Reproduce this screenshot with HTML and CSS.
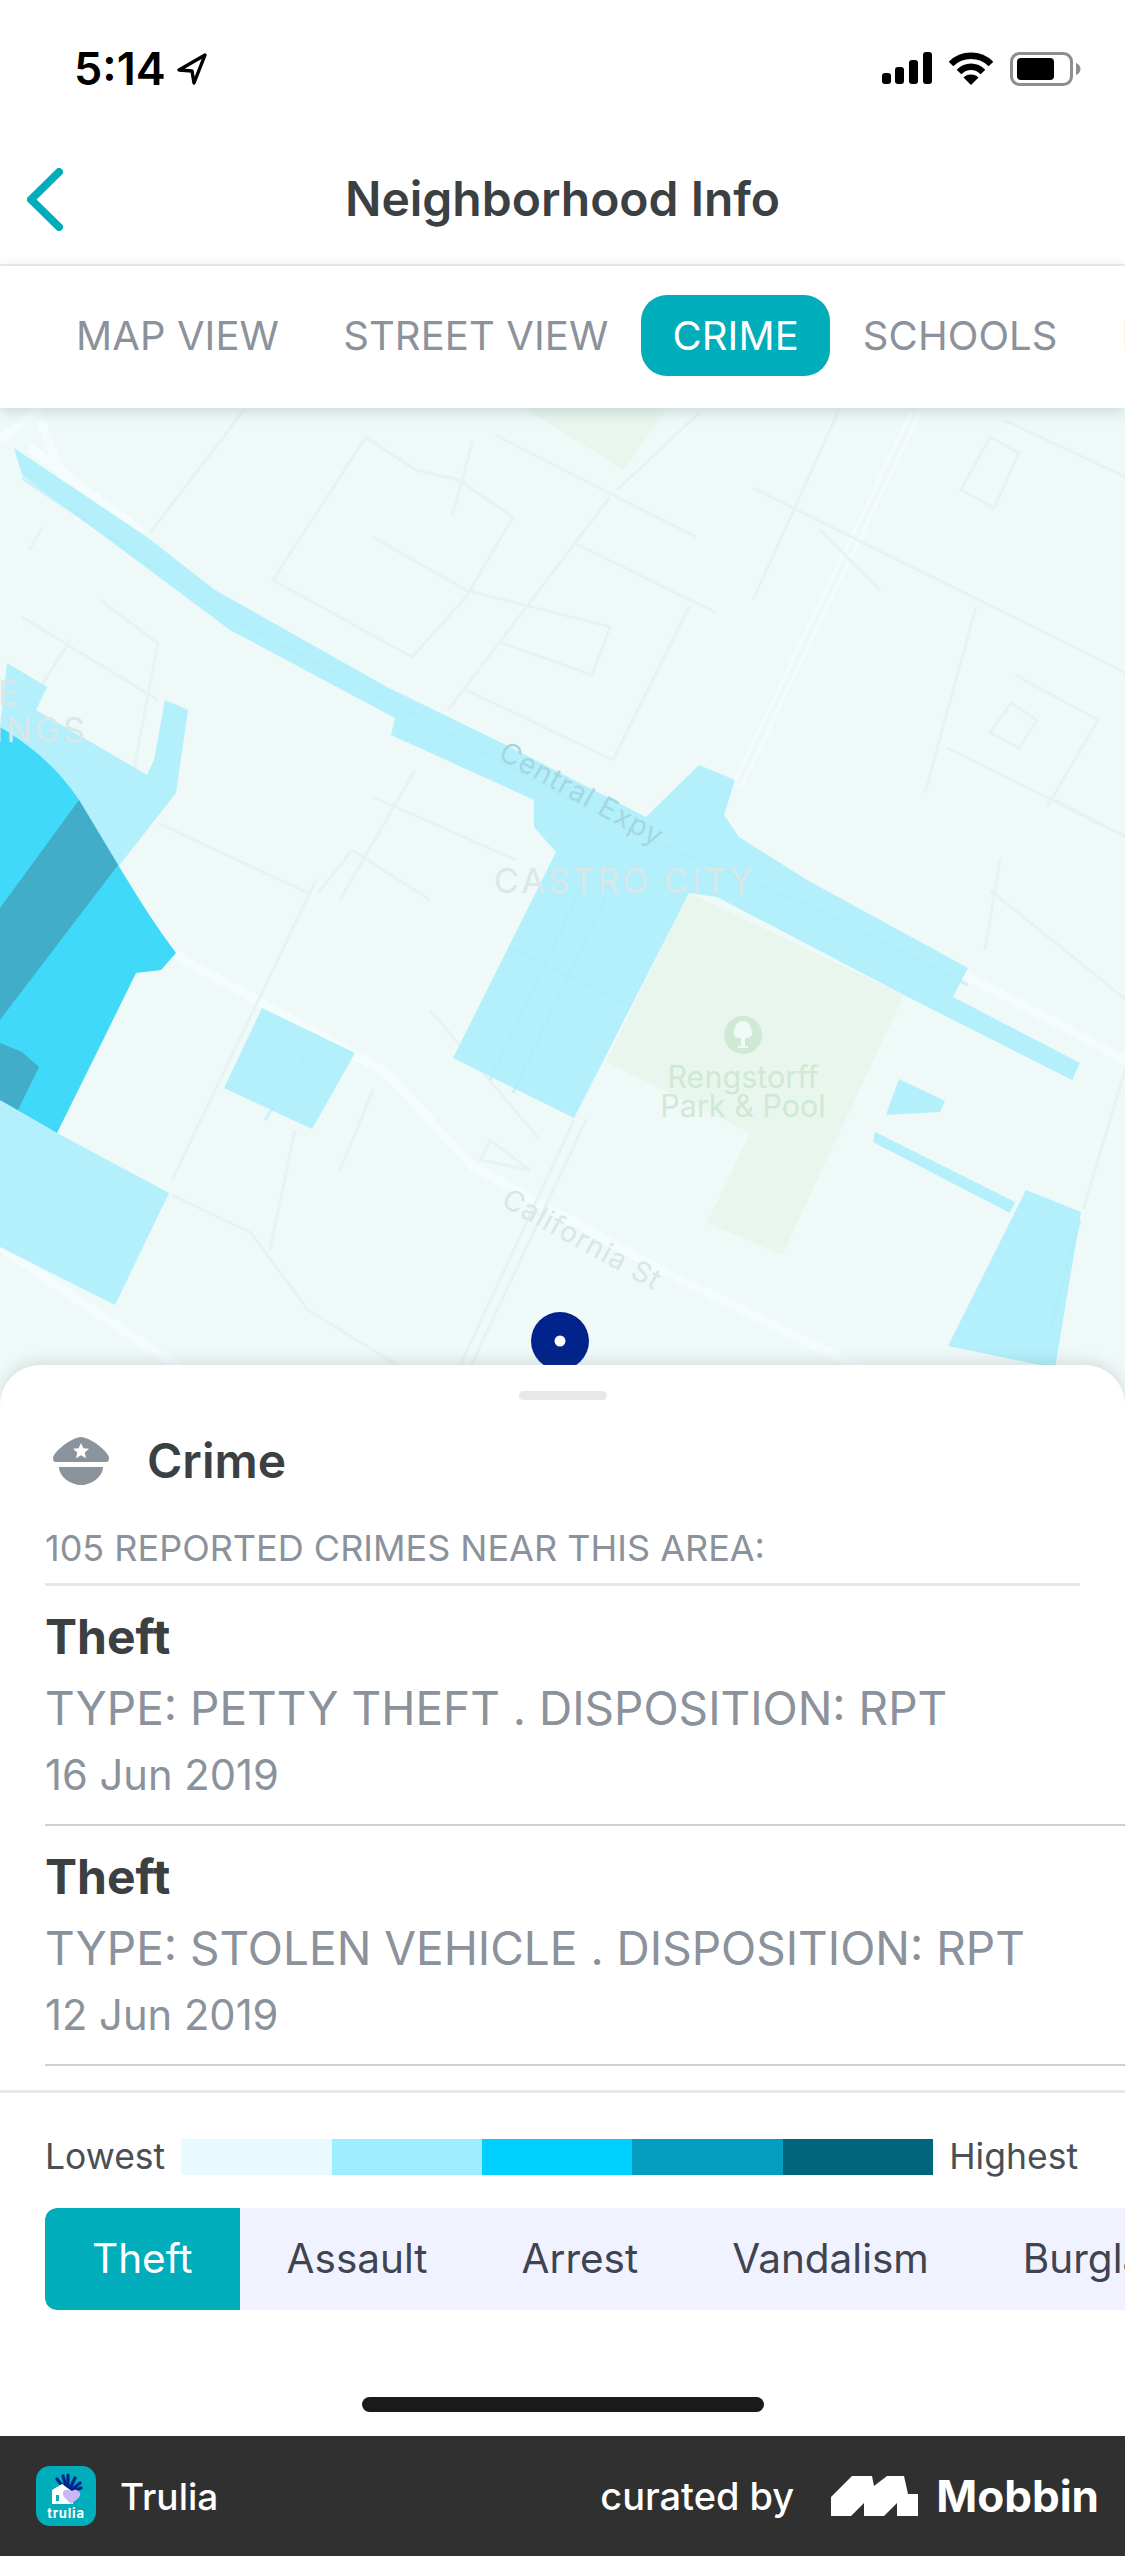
FILE: index.html
```html
<!DOCTYPE html>
<html lang="en">
<head>
    <meta charset="UTF-8">
    <meta name="viewport" content="width=device-width, initial-scale=1.0">
    <title>Neighborhood Info</title>
    <link rel="stylesheet" href="styles.css">
</head>
<body>

<div class="screen">
    <div class="status-bar">
        <div class="status-time">
            <span>5:14</span>
            <svg class="icon-location" viewBox="0 0 32 34"><path d="M29 3 3 18l13 1 2 12z" fill="none" stroke="#000" stroke-width="3.4" stroke-linejoin="round"/></svg>
        </div>
        <div class="status-icons">
            <svg class="icon-signal" viewBox="0 0 50 32" fill="#000">
                <rect x="0" y="21" width="9" height="11" rx="3"/>
                <rect x="13" y="15" width="9" height="17" rx="3"/>
                <rect x="27" y="8" width="9" height="24" rx="3"/>
                <rect x="41" y="0" width="9" height="32" rx="3"/>
            </svg>
            <svg class="icon-wifi" viewBox="0 0 46 33" fill="none" stroke="#000" stroke-width="6.5">
                <path d="M3 12C14 1 32 1 43 12"/>
                <path d="M11 20C18 13 28 13 35 20"/>
                <path d="M23 33 15.500 25.500C19 21.500 27 21.500 30.500 25.500Z" fill="#000" stroke="none"/>
            </svg>
            <svg class="icon-battery" viewBox="0 0 71 34">
                <rect x="1.500" y="1.500" width="60" height="31" rx="8" fill="none" stroke="#8e8e8e" stroke-width="3"/>
                <rect x="7" y="6" width="37" height="22" rx="4" fill="#000"/>
                <path d="M66 11c3 1 4.500 3.500 4.500 6s-1.500 5-4.500 6z" fill="#8e8e8e"/>
            </svg>
        </div>
    </div>

    <div class="nav-bar">
        <svg class="icon-back" viewBox="0 0 36 63"><path d="M32 4 4 31.500 32 59" fill="none" stroke="#00adba" stroke-width="8" stroke-linecap="round" stroke-linejoin="round"/></svg>
        <h1 class="nav-title">Neighborhood Info</h1>
    </div>

    <div class="view-tabs">
        <span class="view-tab">MAP VIEW</span>
        <span class="view-tab">STREET VIEW</span>
        <span class="view-tab active">CRIME</span>
        <span class="view-tab">SCHOOLS</span>
        <span class="view-tab">NEARBY</span>
    </div>

    <div class="map">
        <svg class="map-canvas" viewBox="0 408 1125 997">
            <!-- park and greens -->
            <g class="park">
                <path d="M689 893 904 995 782 1255 707 1223 750 1133 606 1062z"/>
                <path d="M524 408 667 408 624 470z"/>
            </g>

            <!-- wide roads -->
            <g class="road-wide">
                <path d="M0 1247 179 1368"/>
                <path d="M172 953 387 1073 473 1167 674 1277 861 1368"/>
                <path d="M961 973 1126 1060"/>
                <path d="M29 447 143 533"/>
                <path d="M0 440 40 408"/>
                <path d="M40 420 80 520"/>
                <path d="M911 413 732 787" class="road-thin"/>
                <path d="M920 413 741 787" class="road-thin"/>
            </g>

            <!-- street grid -->
            <g class="road">
                <path d="M495 435 696 537"/>
                <path d="M473 440 452 517"/>
                <path d="M366 437 416 470 459 480 513 517 466 597 412 657 273 580z"/>
                <path d="M373 537 466 590 610 627 592 675 502 643"/>
                <path d="M574 543 717 613"/>
                <path d="M610 497 448 710"/>
                <path d="M689 607 613 760"/>
                <path d="M466 690 613 760"/>
                <path d="M753 488 1126 673"/>
                <path d="M839 410 753 600"/>
                <path d="M700 412 617 490"/>
                <path d="M976 607 925 793"/>
                <path d="M947 748 1126 837"/>
                <path d="M990 437 1019 453 994 508 961 490z"/>
                <path d="M1011 703 1037 720 1019 748 990 733z"/>
                <path d="M1015 675 1098 720 1047 807"/>
                <path d="M1055 800 1126 837"/>
                <path d="M1004 420 1126 477"/>
                <path d="M880 590 820 530"/>
                <path d="M100 600 158 643 130 790"/>
                <path d="M22 617 158 700"/>
                <path d="M70 640 20 720"/>
                <path d="M43 527 29 550"/>
                <path d="M244 410 150 533"/>
                <path d="M352 850 430 900"/>
                <path d="M373 797 516 860"/>
                <path d="M415 770 340 900"/>
                <path d="M352 850 318 893"/>
                <path d="M158 823 308 893"/>
                <path d="M316 880 172 1180"/>
                <path d="M172 1195 251 1233 308 1310 402 1368"/>
                <path d="M574 1120 459 1368"/>
                <path d="M586 1120 470 1368"/>
                <path d="M1083 1210 1126 1067"/>
                <path d="M430 1010 540 1140"/>
                <path d="M490 1140 530 1170 480 1160z"/>
                <path d="M373 1090 340 1170"/>
                <path d="M295 1130 270 1250"/>
                <path d="M990 890 1126 1000"/>
                <path d="M1000 860 985 950"/>
            </g>

            <!-- crime areas -->
            <g class="crime-low">
                <path d="M14 448 147 537 215 590 387 687 502 743 646 817 699 765 735 780 724 815 739 837 807 880 968 968 953 997 1080 1063 1072 1080 904 995 717 897 689 893 574 1118 453 1058 556 852 534 827 534 800 391 735 395 718 230 630 22 475z"/>
                <path d="M7 663 47 687 36 710 147 775 154 760 165 700 188 710 176 793 118 867 57 1133 0 1100 0 727z"/>
                <path d="M0 1100 57 1133 169 1193 115 1305 0 1247z"/>
                <path d="M262 1008 355 1053 312 1129 224 1088z"/>
                <path d="M899 1079 945 1101 940 1112 886 1115z"/>
                <path d="M875 1132 1015 1202 1010 1213 873 1142z"/>
                <path d="M1026 1190 1081 1212 1055 1368 948 1346z"/>
            </g>
            <path class="crime-mid" d="M0 727C30 745 58 768 79 800 110 850 140 905 176 953L161 970 136 973 108 1030 57 1133 0 1100z"/>
            <g class="crime-high">
                <path d="M79 800 118 865 0 1020 0 908z"/>
                <path d="M0 1043 22 1052 39 1067 18 1110 0 1100z"/>
            </g>

            <!-- faint streets that show through the areas -->
            <g class="road-over">
                <path d="M22 478 230 618 395 704 534 780 650 840 807 905 968 985"/>
                <path d="M606 897 513 1093"/>
                <path d="M580 890 490 1080"/>
                <path d="M509 947 624 1003"/>
                <path d="M308 1053 265 1120"/>
                <path d="M1080 1220 1050 1330"/>
            </g>

            <!-- labels -->
            <text class="label-place" x="-2" y="705">E</text>
            <text class="label-place" x="-6" y="742">INGS</text>
            <text class="label-place" x="494" y="893">CASTRO CITY</text>
            <text class="label-street label-on-area" transform="translate(497 758) rotate(29)">Central Expy</text>
            <text class="label-street" transform="translate(500 1205) rotate(29)">California St</text>
            <circle class="tree-badge" cx="743" cy="1035" r="19"/>
            <path d="M743 1021c5 0 8 4 8 8 3 3 1 9-4 9h-2v8h3v2h-10v-2h3v-8h-2c-5 0-7-6-4-9 0-4 3-8 8-8z" fill="#f2faf8"/>
            <text class="label-park" x="743" y="1088">Rengstorff</text>
            <text class="label-park" x="743" y="1117">Park &amp; Pool</text>

            <!-- location pin -->
            <ellipse cx="560" cy="1341" rx="29" ry="29" fill="#03238c"/>
            <circle cx="560" cy="1341" r="5.500" fill="#fff"/>
        </svg>
    </div>

    <div class="sheet">
        <div class="sheet-handle"></div>
        <div class="sheet-title">
            <svg class="icon-police" viewBox="0 0 56 48">
                <path d="M0 21C0 15 19 0 28 0S56 15 56 21c0 3-1 4-3 4H3c-2 0-3-1-3-4z" fill="#8b939c"/>
                <path d="M6 30H50C50 40 38 48 28 48S6 40 6 30z" fill="#8b939c"/>
                <path d="M28 6l2.400 5.200 5.600.600-4.200 3.800 1.200 5.600-5-2.900-5 2.900 1.200-5.600-4.200-3.800 5.600-.600z" fill="#fff"/>
            </svg>
            <h2>Crime</h2>
        </div>
        <p class="sheet-count">105 REPORTED CRIMES NEAR THIS AREA:</p>

        <ul class="crime-list">
            <li class="crime-item">
                <h3>Theft</h3>
                <p class="crime-type">TYPE: PETTY THEFT . DISPOSITION: RPT</p>
                <p class="crime-date">16 Jun 2019</p>
            </li>
            <li class="crime-item">
                <h3>Theft</h3>
                <p class="crime-type">TYPE: STOLEN VEHICLE . DISPOSITION: RPT</p>
                <p class="crime-date">12 Jun 2019</p>
            </li>
        </ul>

        <div class="legend">
            <span>Lowest</span>
            <div class="legend-bar">
                <i class="step-1"></i>
                <i class="step-2"></i>
                <i class="step-3"></i>
                <i class="step-4"></i>
                <i class="step-5"></i>
            </div>
            <span>Highest</span>
        </div>

        <div class="filters">
            <span class="filter active">Theft</span>
            <span class="filter">Assault</span>
            <span class="filter">Arrest</span>
            <span class="filter">Vandalism</span>
            <span class="filter">Burglary</span>
        </div>

        <div class="home-indicator"></div>
    </div>

    <div class="footer">
        <div class="footer-app">
            <svg class="app-logo" viewBox="0 0 60 60">
                <rect width="60" height="60" rx="14" fill="#00adba"/>
                <g stroke="#03238c" stroke-width="3.200" stroke-linecap="round">
                    <path d="M32 27 21 13"/>
                    <path d="M32 27 27 10"/>
                    <path d="M32 27 32 9"/>
                    <path d="M32 27 39 12"/>
                    <path d="M32 27 44 17"/>
                    <path d="M32 27 45 22"/>
                </g>
                <path d="M16 24 26 18 37 26V38H16z" fill="#fff"/>
                <rect x="20" y="29" width="3" height="6" fill="#00adba"/>
                <path d="M35 38 28 31C25 27 28 23 32 24c2 0 3 1 3.500 2 1-2 3-2.500 5-2 4 1 5 5 2 8z" fill="#c9b6f7"/>
                <text class="app-logo-text" x="30" y="52">trulia</text>
            </svg>
            <span>Trulia</span>
        </div>
        <div class="footer-brand">
            <span class="curated">curated by</span>
            <svg class="mobbin-logo" viewBox="0 0 87 40"><path d="M0 40V21L21 0H41L43 10 56 0H73L77 18H87V40H66V27L53 40H33V27L20 40z" fill="#fff"/></svg>
            <span class="mobbin-name">Mobbin</span>
        </div>
    </div>
</div>

</body>
</html>
```

FILE: styles.css
```css
* {
    box-sizing: border-box;
}
html, body {
    margin: 0;
    padding: 0;
}
body {
    font-family: Inter, "Noto Sans", sans-serif;
    background-color: #fff;
}
h1, h2, h3, p, ul {
    margin: 0;
    padding: 0;
}
.screen {
    width: 1125px;
    height: 2556px;
    display: flex;
    flex-direction: column;
    overflow: hidden;
    background: #fff;
}

/* status bar */
.status-bar {
    flex: none;
    height: 120px;
    padding: 44px 44px 0 74px;
    display: flex;
    justify-content: space-between;
    align-items: flex-start;
}
.status-time {
    display: flex;
    align-items: center;
    gap: 10px;
    font-size: 45px;
    line-height: 50px;
    font-weight: 600;
    color: #000;
}
.icon-location {
    width: 32px;
    height: 34px;
}
.status-icons {
    display: flex;
    align-items: flex-start;
    gap: 16px;
    padding-top: 8px;
}
.icon-signal {
    width: 50px;
    height: 32px;
}
.icon-wifi {
    width: 46px;
    height: 33px;
}
.icon-battery {
    width: 71px;
    height: 34px;
}

/* nav */
.nav-bar {
    flex: none;
    height: 146px;
    padding-top: 14px;
    display: grid;
    grid-template-columns: 1fr auto 1fr;
    align-items: center;
    border-bottom: 2px solid #efefef;
}
.icon-back {
    width: 36px;
    height: 63px;
    margin-left: 27px;
}
.nav-title {
    font-size: 48px;
    line-height: 60px;
    font-weight: 600;
    color: #3b4042;
}

/* view tabs */
.view-tabs {
    flex: none;
    height: 142px;
    position: relative;
    z-index: 2;
    padding: 29px 0 0 45px;
    display: flex;
    align-items: flex-start;
    gap: 2px;
    overflow: hidden;
    background: #fff;
    box-shadow: 0 3px 14px rgba(60, 90, 95, 0.22);
}
.view-tab {
    flex: none;
    height: 81px;
    padding: 0 31px;
    font-size: 40px;
    line-height: 81px;
    letter-spacing: 0.1px;
    color: #8b929b;
}
.view-tab.active {
    background: #00adba;
    color: #fff;
    border-radius: 26px;
}

/* map */
.map {
    flex: 1;
    min-height: 0;
    background: #eff9f8;
}
.map-canvas {
    display: block;
    width: 1125px;
    height: 997px;
}
.park path {
    fill: #e8f6ee;
}
.road-wide path {
    fill: none;
    stroke: #f4fcfd;
    stroke-width: 9;
}
.road-wide .road-thin {
    stroke-width: 3;
}
.road path {
    fill: none;
    stroke: #e7f3f3;
    stroke-width: 3;
}
.road-over path {
    fill: none;
    stroke: #aeecf8;
    stroke-width: 3;
    opacity: 0.6;
}
.crime-low path {
    fill: #b3f0fb;
}
.crime-mid {
    fill: #40d9fa;
}
.crime-high path {
    fill: #42adc9;
}
.label-place {
    font-size: 34px;
    letter-spacing: 3px;
    fill: #d9e7e9;
}
.label-street {
    font-size: 28.500px;
    letter-spacing: 1px;
    fill: #d8e6e9;
}
.label-on-area {
    fill: #a6d6e1;
}
.label-park {
    font-size: 30.500px;
    text-anchor: middle;
    fill: #cfe9d4;
}
.tree-badge {
    fill: #cfe9d4;
}

/* bottom sheet */
.sheet {
    flex: none;
    height: 1071px;
    margin-top: -40px;
    position: relative;
    z-index: 3;
    background: #fff;
    border-radius: 40px 40px 0 0;
    box-shadow: 0 -4px 14px rgba(60, 80, 85, 0.14);
    overflow: hidden;
}
.sheet-handle {
    width: 88px;
    height: 9px;
    margin: 26px auto 0;
    border-radius: 5px;
    background: #e8e8e8;
}
.sheet-title {
    height: 48px;
    margin-top: 37px;
    padding-left: 53px;
    display: flex;
    align-items: center;
    gap: 38px;
}
.icon-police {
    width: 56px;
    height: 48px;
}
.sheet-title h2 {
    font-size: 48px;
    line-height: 48px;
    font-weight: 600;
    color: #3b4042;
}
.sheet-count {
    margin: 43px 45px 0;
    padding-bottom: 15px;
    border-bottom: 3px solid #e6e6e6;
    font-size: 36px;
    line-height: 40px;
    color: #8b929b;
}
.crime-list {
    list-style: none;
    margin-left: 45px;
}
.crime-item {
    height: 240px;
    padding-top: 23px;
    border-bottom: 2px solid #d0d0d0;
}
.crime-item h3 {
    font-size: 48px;
    line-height: 56px;
    font-weight: 700;
    color: #3b4042;
}
.crime-type {
    margin-top: 16px;
    font-size: 46px;
    line-height: 54px;
    color: #8b929b;
}
.crime-date {
    margin-top: 16px;
    font-size: 41.700px;
    line-height: 48px;
    color: #8b929b;
}

/* legend */
.legend {
    margin-top: 24px;
    padding: 46px 47px 0 45px;
    border-top: 3px solid #e8e8e8;
    display: flex;
    align-items: center;
    gap: 16px;
    font-size: 35.500px;
    line-height: 36px;
    color: #4a4f55;
}
.legend-bar {
    flex: 1;
    height: 36px;
    display: flex;
}
.legend-bar i {
    flex: 1;
}
.step-1 {
    background: #e8f9ff;
}
.step-2 {
    background: #9deeff;
}
.step-3 {
    background: #00d0ff;
}
.step-4 {
    background: #069dc2;
}
.step-5 {
    background: #00657d;
}

/* filter strip */
.filters {
    height: 102px;
    margin: 33px 0 0 45px;
    display: flex;
    overflow: hidden;
    background: #f0f3ff;
    border-radius: 12px 0 0 12px;
}
.filter {
    flex: none;
    padding: 0 47px;
    font-size: 40.500px;
    line-height: 102px;
    color: #3f4450;
}
.filter.active {
    background: #00adba;
    color: #fff;
    border-radius: 12px 0 0 12px;
}
.home-indicator {
    width: 402px;
    height: 15px;
    margin: 87px auto 0;
    border-radius: 8px;
    background: #1a1a1a;
}

/* footer */
.footer {
    flex: none;
    height: 120px;
    padding: 0 26px 0 36px;
    display: flex;
    justify-content: space-between;
    align-items: center;
    background: #303030;
    color: #fff;
    font-size: 37px;
    font-weight: 500;
}
.footer-app {
    display: flex;
    align-items: center;
    gap: 24px;
}
.app-logo {
    width: 60px;
    height: 60px;
}
.app-logo-text {
    font-size: 13px;
    font-weight: 700;
    letter-spacing: 0.8px;
    text-anchor: middle;
    fill: #fff;
}
.footer-brand {
    display: flex;
    align-items: center;
}
.curated {
    margin-right: 37px;
    font-size: 38px;
}
.mobbin-logo {
    width: 87px;
    height: 40px;
    margin-right: 18px;
}
.mobbin-name {
    font-size: 44px;
    font-weight: 700;
}
```
